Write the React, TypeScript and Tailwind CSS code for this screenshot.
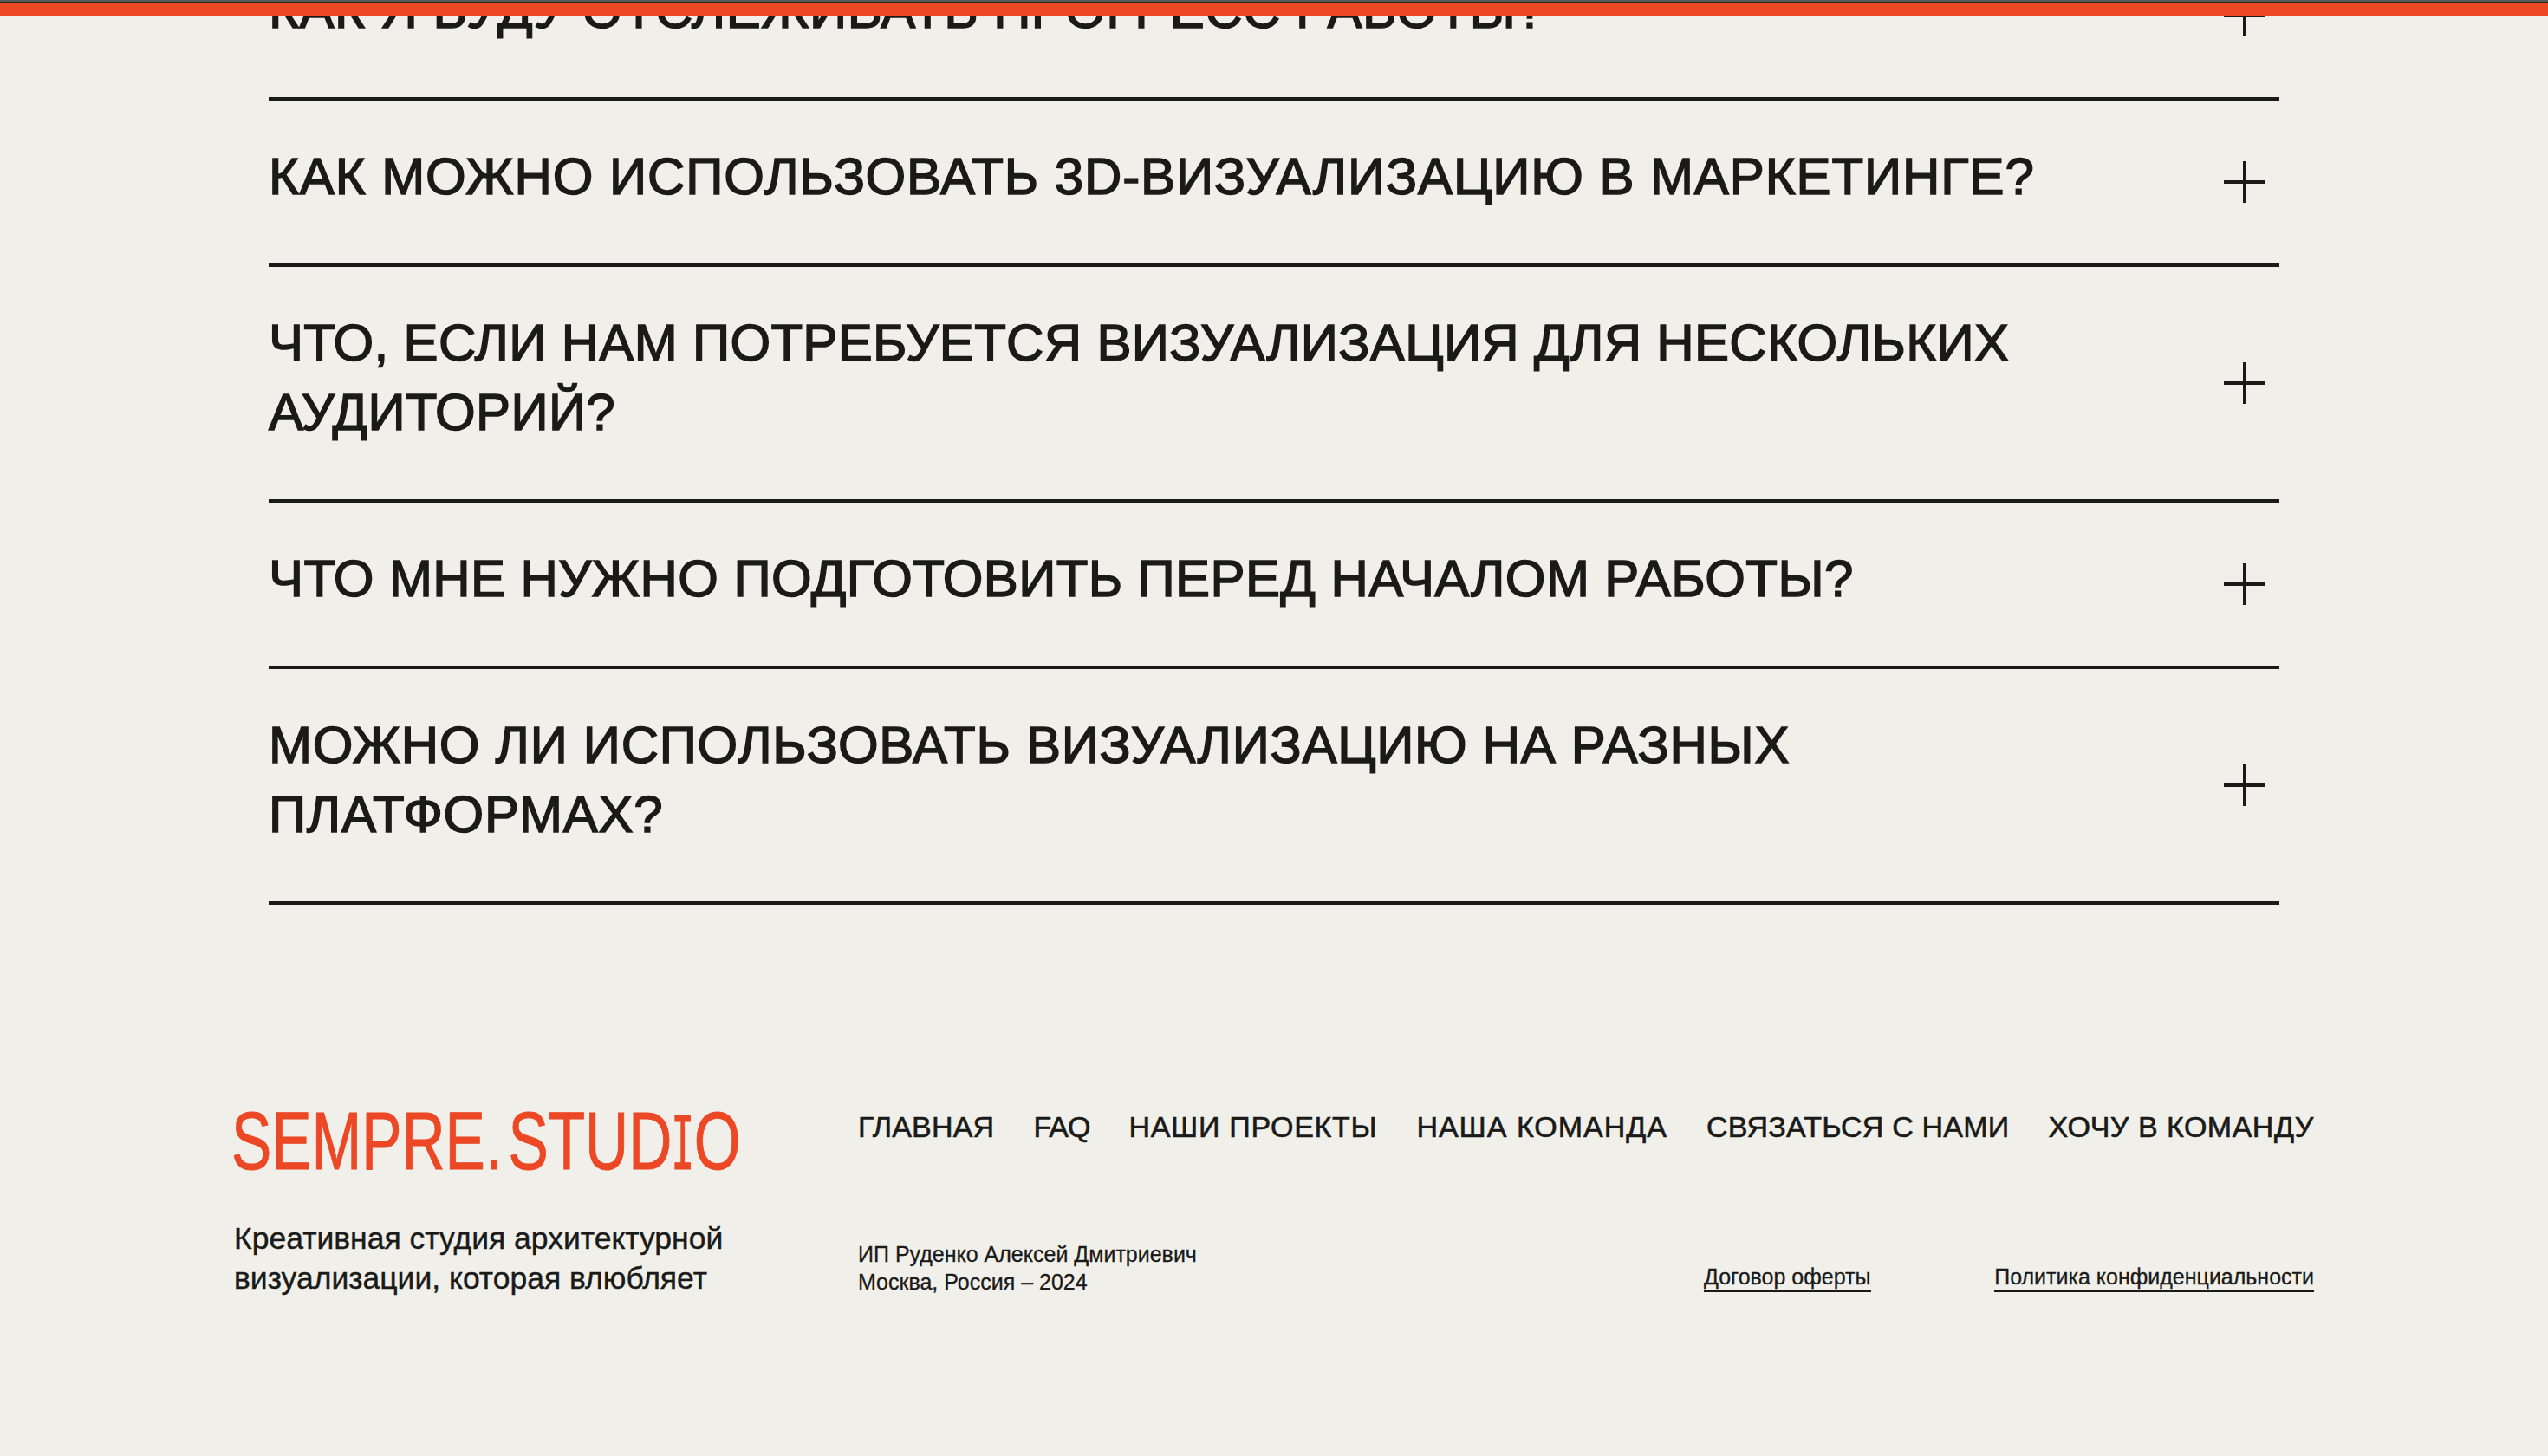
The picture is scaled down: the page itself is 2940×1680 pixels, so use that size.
const questions = [
  { lines: ["КАК Я БУДУ ОТСЛЕЖИВАТЬ ПРОГРЕСС РАБОТЫ?"], tracking: "tracking-[0.5px]" },
  { lines: ["КАК МОЖНО ИСПОЛЬЗОВАТЬ 3D-ВИЗУАЛИЗАЦИЮ В МАРКЕТИНГЕ?"], tracking: "tracking-[0.9px]" },
  { lines: ["ЧТО, ЕСЛИ НАМ ПОТРЕБУЕТСЯ ВИЗУАЛИЗАЦИЯ ДЛЯ НЕСКОЛЬКИХ", "АУДИТОРИЙ?"], tracking: "tracking-[0.32px]" },
  { lines: ["ЧТО МНЕ НУЖНО ПОДГОТОВИТЬ ПЕРЕД НАЧАЛОМ РАБОТЫ?"], tracking: "tracking-[0.4px]" },
  { lines: ["МОЖНО ЛИ ИСПОЛЬЗОВАТЬ ВИЗУАЛИЗАЦИЮ НА РАЗНЫХ", "ПЛАТФОРМАХ?"], tracking: "tracking-[0.7px]" },
];

const navLinks = [
  { label: "ГЛАВНАЯ", tracking: "tracking-[0.2px]" },
  { label: "FAQ", tracking: "tracking-[-1px]" },
  { label: "НАШИ ПРОЕКТЫ", tracking: "tracking-[0.7px]" },
  { label: "НАША КОМАНДА", tracking: "tracking-[1px]" },
  { label: "СВЯЗАТЬСЯ С НАМИ", tracking: "tracking-[0.2px]" },
  { label: "ХОЧУ В КОМАНДУ", tracking: "tracking-[0.5px]" },
];

function PlusIcon() {
  return (
    <svg width="48" height="48" viewBox="0 0 48 48" className="shrink-0 text-[#1a1a18]">
      <path d="M24 0V48M0 24H48" stroke="currentColor" strokeWidth="4" fill="none" />
    </svg>
  );
}

function FaqRow({ lines, tracking }: { lines: string[]; tracking: string }) {
  return (
    <div className="flex items-center justify-between border-b-4 border-[#1a1a18] pr-[16px]">
      <h3 className={`pt-[48px] pb-[60px] text-[60px] leading-[80px] font-normal [-webkit-text-stroke:1.5px_#1a1a18] ${tracking}`}>
        {lines.map(line => (
          <span key={line} className="block whitespace-nowrap">{line}</span>
        ))}
      </h3>
      <PlusIcon />
    </div>
  );
}

export default function App() {
  return (
    <div className="relative h-[1680px] overflow-hidden bg-[#f0efea] font-['Liberation_Sans',Arial,sans-serif] text-[#1a1a18]">
      {/* sticky progress bar */}
      <div className="absolute inset-x-0 top-0 z-10 h-[18px] border-t-2 border-[#5c5b56] bg-[#ec4826]">
        <div className="h-px bg-[#2a2a26]" />
      </div>

      {/* page is scrolled, first row sits partly above the fold */}
      <div className="-mt-[76px]">
        <section className="mx-[310px]">
          {questions.map(q => (
            <FaqRow key={q.lines[0]} lines={q.lines} tracking={q.tracking} />
          ))}
        </section>

        <footer className="mt-[236px] flex pl-[270px] pr-[270px]">
          <div className="w-[720px] shrink-0">
            <div className="-ml-[3px] h-[72px] origin-left scale-x-[0.73] whitespace-nowrap text-[95px] leading-[72px] text-[#ec4826] [-webkit-text-stroke:1px_#ec4826]">
              SEMPRE<span className="mr-[10px]">.</span>STUD
              <span className="-mx-[11px] inline-block scale-x-[0.65] font-['Liberation_Mono',monospace]">I</span>O
            </div>
            <p className="mt-[54px] text-[35.5px] leading-[46px] [-webkit-text-stroke:0.4px_#1a1a18]">
              Креативная студия архитектурной
              <br />
              визуализации, которая влюбляет
            </p>
          </div>

          <div className="flex-1">
            <nav className="flex justify-between whitespace-nowrap text-[34px] leading-[40px] [-webkit-text-stroke:0.6px_#1a1a18]">
              {navLinks.map(link => (
                <a key={link.label} className={link.tracking}>{link.label}</a>
              ))}
            </nav>
            <div className="mt-[111px] flex items-end text-[25px] leading-[32px] [-webkit-text-stroke:0.3px_#1a1a18]">
              <p className="w-[976px]">
                ИП Руденко Алексей Дмитриевич
                <br />
                Москва, Россия – 2024
              </p>
              <div className="mb-[4px] flex flex-1 justify-between">
                <a className="border-b-2 border-[#1a1a18]">Договор оферты</a>
                <a className="border-b-2 border-[#1a1a18]">Политика конфиденциальности</a>
              </div>
            </div>
          </div>
        </footer>
      </div>
    </div>
  );
}
